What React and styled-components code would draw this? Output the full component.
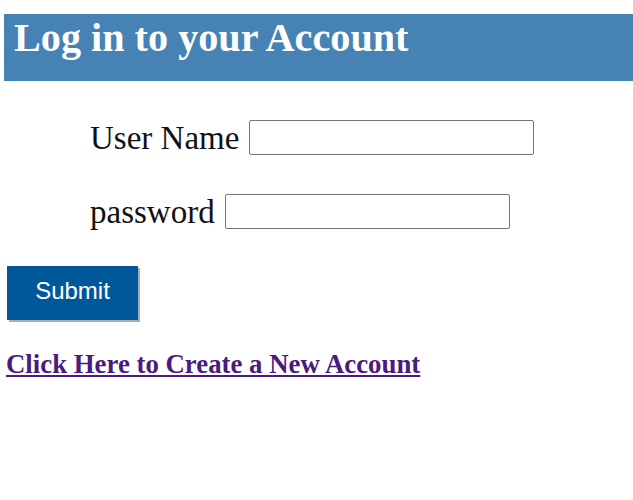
import React from "react";
import styled, { createGlobalStyle } from "styled-components";

const GlobalStyle = createGlobalStyle`
  body {
    margin: 0;
    background: #fff;
    font-family: "Liberation Serif", "Times New Roman", serif;
  }
`;

const Page = styled.div`
  padding: 14px 0 0 4px;
  border-top: 3px solid #f4f5f5;
  margin-top: -3px;
`;

const Header = styled.h1`
  margin: 0;
  height: 67px;
  background: #4682b4;
  color: #fff;
  font-size: 40.2px;
  font-weight: bold;
  line-height: 48px;
  padding-left: 10px;
  box-sizing: border-box;
`;

const Form = styled.form`
  display: flex;
  flex-direction: column;
  margin-top: 39px;
`;

const Row = styled.div`
  display: flex;
  align-items: center;
  gap: 10px;
  padding-left: 86px;
  margin-bottom: ${(p) => p.gap || "39px"};
`;

const Label = styled.label`
  font-size: 33px;
  color: #111;
  line-height: 34px;
`;

const Input = styled.input`
  width: ${(p) => p.w}px;
  height: 35px;
  box-sizing: border-box;
  border: 1px solid #767676;
  border-radius: 2px;
  padding: 2px 4px;
  font-size: 20px;
`;

const Submit = styled.button`
  align-self: flex-start;
  margin: 0 0 0 3px;
  width: 131px;
  height: 54px;
  background: #00579a;
  color: #fff;
  border: none;
  box-shadow: 2px 2px 0 #a9aeb3;
  font-family: "Liberation Sans", Arial, sans-serif;
  font-size: 24px;
  padding: 0 0 4px;
  cursor: pointer;
`;

const CreateLink = styled.a`
  display: inline-block;
  margin: 29px 0 0 2px;
  font-size: 26.8px;
  font-weight: bold;
  color: #4b1a7e;
  text-decoration: underline;
`;

const App = () => {
  return (
    <Page>
      <GlobalStyle />
      <Header>Log in to your Account</Header>
      <Form onSubmit={(e) => e.preventDefault()}>
        <Row>
          <Label htmlFor="user">User Name</Label>
          <Input id="user" type="text" w={285} />
        </Row>
        <Row gap="37px">
          <Label htmlFor="pass">password</Label>
          <Input id="pass" type="password" w={285} />
        </Row>
        <Submit type="submit">Submit</Submit>
      </Form>
      <CreateLink href="#">Click Here to Create a New Account</CreateLink>
    </Page>
  );
};

export default App;
